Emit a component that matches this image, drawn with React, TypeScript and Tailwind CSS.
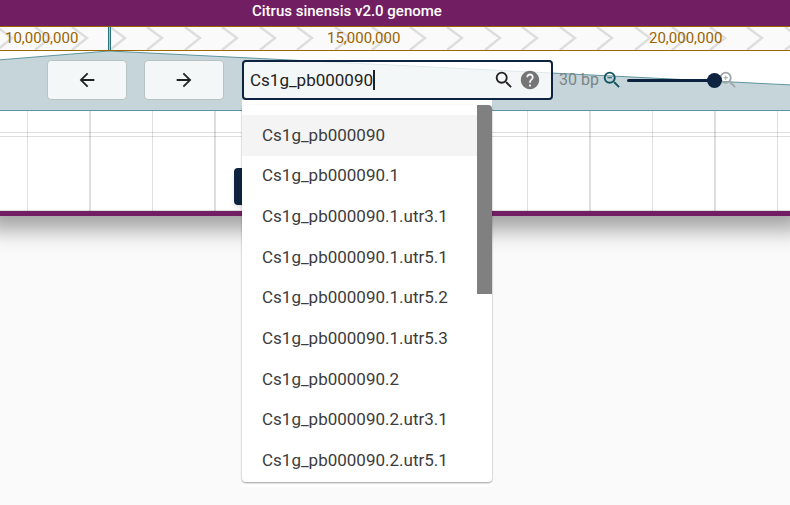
import React, { useState } from "react";
import {
  MdArrowBack,
  MdArrowForward,
  MdHelp,
  MdSearch,
  MdZoomIn,
  MdZoomOut,
} from "react-icons/md";

const suggestions = [
  "Cs1g_pb000090",
  "Cs1g_pb000090.1",
  "Cs1g_pb000090.1.utr3.1",
  "Cs1g_pb000090.1.utr5.1",
  "Cs1g_pb000090.1.utr5.2",
  "Cs1g_pb000090.1.utr5.3",
  "Cs1g_pb000090.2",
  "Cs1g_pb000090.2.utr3.1",
  "Cs1g_pb000090.2.utr5.1",
];

const rulerLabels = ["10,000,000", "15,000,000", "20,000,000"];

// Chevrons come in pairs, one pair every 75px
const chevrons = Array.from({ length: 40 }, (_, i) => {
  const x = Math.floor(i / 2) * 75 + (i % 2 ? 35 : -3);
  return `M${x} 0L${x + 15} 11L${x} 23`;
}).join("");

const OverviewRuler: React.FC = () => (
  <div className="relative h-[25px] overflow-hidden border-y border-[#9b6500] bg-[#fafafa]">
    <svg className="absolute inset-0 h-full w-full" aria-hidden="true">
      <path d={chevrons} fill="none" stroke="#dddddd" strokeWidth="2.4" />
    </svg>
    <div className="relative flex pl-[5px] text-[15px] leading-[22px] text-[#9b6500]">
      {rulerLabels.map((label) => (
        <span key={label} className="w-[322px] shrink-0">
          {label}
        </span>
      ))}
    </div>
    {/* Visible region */}
    <div className="absolute inset-y-0 left-[108px] w-[3px] border-x border-[#2c7180] bg-[#a9c4ca]" />
  </div>
);

const GridTracks: React.FC = () => (
  <div className="relative h-[100px] overflow-hidden bg-white">
    <svg className="absolute inset-0 h-full w-full" aria-hidden="true">
      {Array.from({ length: 16 }, (_, i) => (
        <g key={i} fill="#000" fillOpacity="0.13">
          <rect x={27 + i * 125} y="0" width="1" height="100" />
          <rect x={89 + i * 125} y="0" width="2" height="100" />
        </g>
      ))}
      <g fill="#000" fillOpacity="0.13">
        <rect x="0" y="21" width="100%" height="1" />
        <rect x="0" y="25" width="100%" height="1" />
        <rect x="0" y="99" width="100%" height="1" />
      </g>
    </svg>
    <div className="relative flex pt-[57px] pl-[234px]">
      <button
        aria-label="Open track selector"
        className="h-[37px] w-[210px] rounded bg-[#0d233f] shadow-md"
      />
    </div>
  </div>
);

const App: React.FC = () => {
  const [query, setQuery] = useState<string>("Cs1g_pb000090");
  const [zoom, setZoom] = useState<number>(100);

  return (
    <div className="min-h-screen overflow-hidden bg-[#fafafa] font-['Roboto',sans-serif]">
      <main className="border-b-[5px] border-[#721e63] bg-white shadow-[0_0_20px_14px_rgba(0,0,0,0.35)]">
        <header className="h-[26px] bg-[#721e63] pl-[252px]">
          <h1 className="text-[15px] leading-[22px] font-medium text-white">
            Citrus sinensis v2.0 genome
          </h1>
        </header>

        <OverviewRuler />

        {/* Navigation controls */}
        <div className="relative h-[60px]">
          <svg
            className="absolute inset-0 h-full w-full"
            viewBox="0 0 790 60"
            preserveAspectRatio="none"
            aria-hidden="true"
          >
            <path
              d="M-2 9L109 0L792 34V59.5H-2Z"
              fill="#c6d5d9"
              stroke="#5f959e"
              vectorEffect="non-scaling-stroke"
            />
          </svg>
          <div className="relative flex items-center pt-[9px] pl-[47px]">
            <button
              aria-label="Pan left"
              className="flex h-10 w-20 items-center justify-center rounded border border-[#b9c2c4] bg-[#f3f7f8] text-[#212121]"
            >
              <MdArrowBack size={22} />
            </button>
            <button
              aria-label="Pan right"
              className="ml-[17px] flex h-10 w-20 items-center justify-center rounded border border-[#b9c2c4] bg-[#f3f7f8] text-[#212121]"
            >
              <MdArrowForward size={22} />
            </button>

            <div className="relative ml-[18px] w-[311px]">
              <div className="flex h-10 items-center rounded border-2 border-[#0d233f] bg-white/80 pr-[10px] pl-[6px] text-[#212121]">
                <label className="flex flex-1 items-center">
                  <input
                    aria-label="Search for location"
                    value={query}
                    onChange={(e) => setQuery(e.target.value)}
                    className="field-sizing-content bg-transparent text-[17px] leading-5 caret-transparent outline-none"
                  />
                  <span className="h-5 w-[2px] bg-[#212121]" />
                </label>
                <button aria-label="Search">
                  <MdSearch size={22} />
                </button>
                <button aria-label="Help" className="ml-1 text-[#757575]">
                  <MdHelp size={22} />
                </button>
              </div>

              {/* Suggestions */}
              <div className="absolute top-full left-0 z-10 w-[250px] bg-white py-[5px]">
                <div className="relative overflow-hidden rounded bg-white pt-[10px] pb-px shadow-[0_1px_2px_rgba(0,0,0,0.4)]">
                  <ul role="listbox" className="flex h-[366px] flex-col text-[17px] text-[#3c3c3c]">
                    {suggestions.map((item, i) => (
                      <li
                        key={item}
                        role="option"
                        aria-selected={i === 0}
                        className="flex flex-1 items-center pl-5 aria-selected:bg-[#f4f4f4]"
                      >
                        {item}
                      </li>
                    ))}
                  </ul>
                  <div className="absolute top-0 right-0 h-[189px] w-[15px] bg-[#808080]" />
                </div>
              </div>
            </div>

            <span className="ml-[6px] w-[42px] text-base text-[#7b8487]">30 bp</span>
            <button aria-label="Zoom out" className="text-[#135560]">
              <MdZoomOut size={22} />
            </button>
            <div className="relative ml-1 flex h-4 w-[95px] items-center pt-px">
              <div className="h-[3px] w-[87px] rounded bg-[#0d233f]" />
              <input
                type="range"
                aria-label="Zoom level"
                value={zoom}
                onChange={(e) => setZoom(Number(e.target.value))}
                className="absolute inset-0 z-10 h-4 w-full appearance-none bg-transparent [&::-webkit-slider-thumb]:h-[15px] [&::-webkit-slider-thumb]:w-[15px] [&::-webkit-slider-thumb]:appearance-none [&::-webkit-slider-thumb]:rounded-full [&::-webkit-slider-thumb]:bg-[#0d233f]"
              />
            </div>
            <button aria-label="Zoom in" disabled className="-ml-[5px] text-[#9fa7a9]">
              <MdZoomIn size={22} />
            </button>
          </div>
        </div>

        <GridTracks />
      </main>
    </div>
  );
};

export default App;
